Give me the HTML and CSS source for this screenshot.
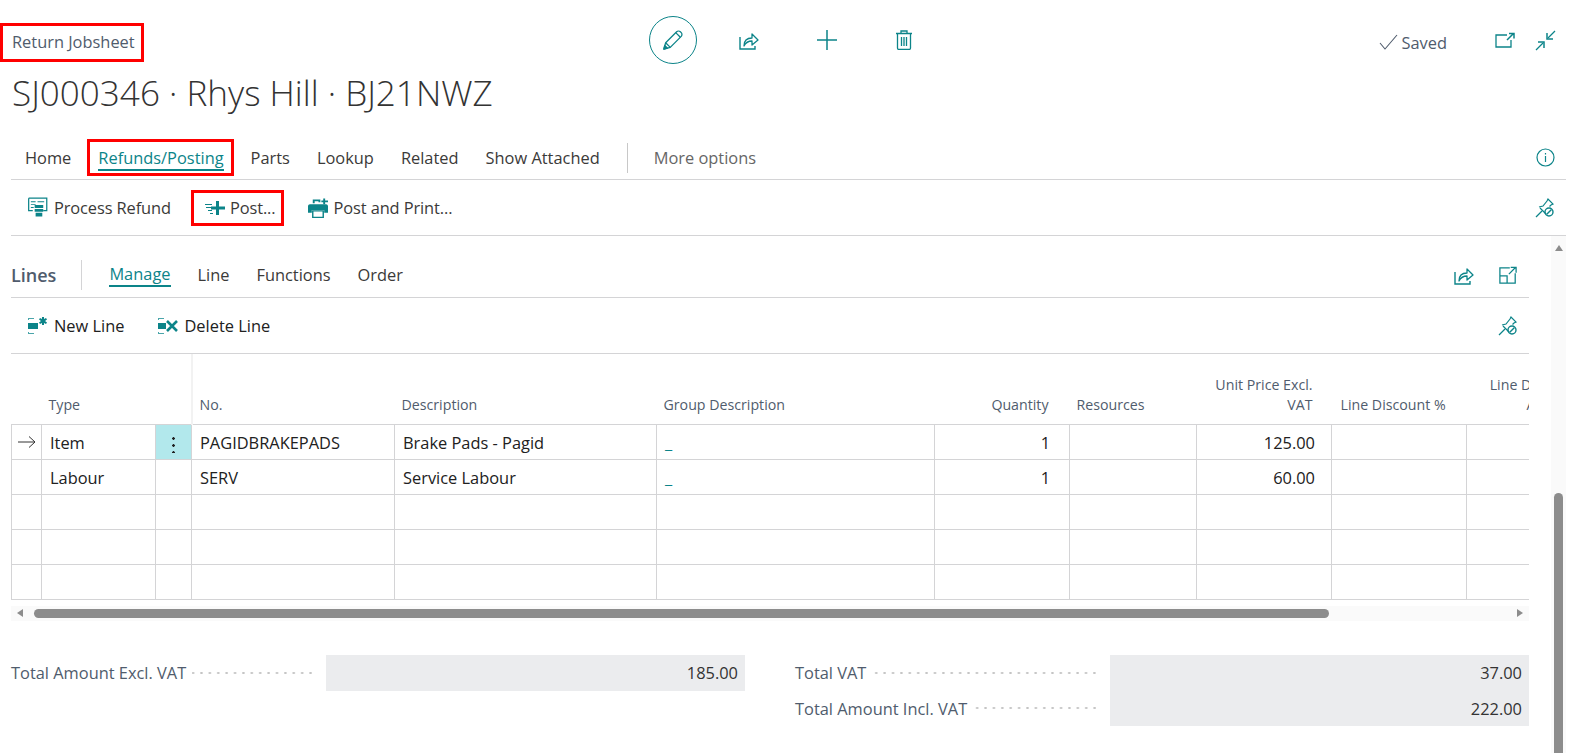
FILE: index.html
```html
<!DOCTYPE html>
<html lang="en">
<head>
  <meta charset="UTF-8" />
  <title>Return Jobsheet</title>
  <link rel="stylesheet" href="styles.css">
</head>
<body>

<svg class="sprite" xmlns="http://www.w3.org/2000/svg">
  <symbol id="i-share" viewBox="0 0 20 20">
    <path d="M1 7v12h15v-3" fill="none" stroke="currentColor" stroke-width="1.4"/>
    <path d="M5 16c0-5 3-8 8-8V4l6 6-6 5v-4c-3 0-6 1-8 5z" fill="none" stroke="currentColor" stroke-width="1.3" stroke-linejoin="round"/>
  </symbol>
  <symbol id="i-pin" viewBox="0 0 20 20">
    <path d="M1 19l6-6" fill="none" stroke="currentColor" stroke-width="1.2"/>
    <path d="M4 9l4-1 4-5 1-2 5 5-2 1-1.500 1.500M11 16l-1-1-5-5" fill="none" stroke="currentColor" stroke-width="1.200"/>
    <circle cx="14" cy="14" r="4" fill="none" stroke="currentColor" stroke-width="1.400"/>
    <path d="M11.500 16.500l5-5" stroke="currentColor" stroke-width="1.400"/>
  </symbol>
</svg>

<header class="page-head">
  <div class="head-top">
    <div class="head-left">
      <span class="caption marked">Return Jobsheet</span>
    </div>
    <div class="head-tools">
      <span class="edit-btn">
        <svg width="24" height="24" viewBox="0 0 24 24" fill="none" stroke="currentColor" stroke-width="1.4" stroke-linejoin="round">
          <path d="M2 22l2-7L16 3c1-1 3-1 4 0l1 1c1 1 1 3 0 4L9 20z"/>
          <path d="M4 15l5 5M15 4l5 5"/>
          <path d="M2 22l1-4 3 3z" fill="currentColor"/>
        </svg>
      </span>
      <svg class="tool share-top"><use href="#i-share"/></svg>
      <svg class="tool plus" viewBox="0 0 20 20"><path d="M10 0v20M0 10h20" stroke="currentColor" stroke-width="1.500"/></svg>
      <svg class="tool trash" viewBox="0 0 18 20" fill="none" stroke="currentColor" stroke-width="1.300">
        <path d="M1 3.500h16M6 3V1h6v2M2.500 4v14c0 1 .5 1.500 1.500 1.500h10c1 0 1.500-.5 1.500-1.500V4"/>
        <path d="M6.500 7v9M9 7v9M11.500 7v9"/>
      </svg>
    </div>
    <div class="head-right">
      <span class="saved">
        <svg width="19" height="16" viewBox="0 0 19 16" fill="none" stroke="currentColor" stroke-width="1.100"><path d="M1 9l5 6L18 1"/></svg>
        Saved
      </span>
      <svg class="open-icon" width="20" height="16" viewBox="0 0 20 16" fill="none" stroke="currentColor" stroke-width="1.300">
        <path d="M12 3H1v12h15V8"/>
        <path d="M12 8l6-6M14 1.500h5v5" stroke-width="1.500"/>
      </svg>
      <svg width="21" height="21" viewBox="0 0 21 21" fill="none" stroke="currentColor" stroke-width="1.300">
        <path d="M20 1l-7 7M1 20l7-7"/>
        <path d="M12 3v6h6M3 12h6v6" stroke-width="1.500"/>
      </svg>
    </div>
  </div>
  <h1 class="title">SJ000346 · Rhys Hill · BJ21NWZ</h1>

  <nav class="tabs">
    <a class="tab">Home</a>
    <a class="tab active marked">Refunds/Posting</a>
    <a class="tab">Parts</a>
    <a class="tab">Lookup</a>
    <a class="tab">Related</a>
    <a class="tab">Show Attached</a>
    <span class="tab-sep"></span>
    <a class="tab more">More options</a>
    <svg class="info" width="19" height="19" viewBox="0 0 19 19" fill="none" stroke="currentColor" stroke-width="1.200">
      <circle cx="9.500" cy="9.500" r="8.500"/>
      <path d="M9.500 8v6M9.500 5v1.500"/>
    </svg>
  </nav>

  <div class="actions page-actions">
    <a class="action">
      <svg width="20" height="21" viewBox="0 0 21 21">
        <path d="M.7.700h19v13H16M5 13.700H.7V.7" fill="none" stroke="currentColor" stroke-width="1.300"/>
        <path d="M3 4h5v1H3zM3 7h5v1H3zM3 10h3v1H3zM10 4h7v1h-7z" fill="currentColor"/>
        <path d="M7 8h9v3H7zM7 12h9v3H7zM8 16h7v4H8z" fill="currentColor"/>
      </svg>
      Process Refund
    </a>
    <a class="action post marked">
      <svg width="20" height="14" viewBox="0 0 20 14">
        <path d="M0 3h7v1H0zM1 6h6v1H1zM3 9h4v1H3zM5 12h3v1H5z" fill="currentColor"/>
        <path d="M11 0h3v5.500h6v3h-6V14h-3V8.500H6v-3h5z" fill="currentColor"/>
      </svg>
      Post...
    </a>
    <a class="action">
      <svg width="20" height="20" viewBox="0 0 21 20">
        <path d="M5 1h8v3h-2V3H7v2H5zM16 0h2v2h3v2h-3v2h-2V4h-2V2h2z" fill="currentColor"/>
        <path d="M2 6h17c1 0 2 1 2 2v7h-4v-3H4v3H0V8c0-1 1-2 2-2z" fill="currentColor"/>
        <path d="M5 13h11v7H5z" fill="none" stroke="currentColor" stroke-width="1.500"/>
      </svg>
      Post and Print...
    </a>
    <svg class="action-pin"><use href="#i-pin"/></svg>
  </div>
</header>

<div class="content">
  <main class="part">
    <div class="part-head">
      <span class="part-title">Lines</span>
      <span class="part-sep"></span>
      <a class="sub-tab active">Manage</a>
      <a class="sub-tab">Line</a>
      <a class="sub-tab">Functions</a>
      <a class="sub-tab">Order</a>
      <svg class="part-icon share-part"><use href="#i-share"/></svg>
      <svg class="part-icon expand" viewBox="0 0 20 20" fill="none" stroke="currentColor" stroke-width="1.400">
        <path d="M12 2H1v17h17V8M1 11h8v8"/>
        <path d="M11 9l7-7M13 1.500h6v6"/>
      </svg>
    </div>

    <div class="actions part-actions">
      <a class="action">
        <svg width="20" height="18" viewBox="0 0 20 18">
          <path d="M0 3V1h6v1H1v1zM0 15v2h6v-1H1v-1z" fill="#4aa5aa"/>
          <path d="M0 6h10v6H0z" fill="currentColor"/>
          <path d="M14 0h2v2l2-1 1 1.500L17 4l2 1.500-1 1.500-2-1v2h-2V6l-2 1-1-1.500L13 4l-2-1.500L12 1l2 1z" fill="currentColor"/>
        </svg>
        New Line
      </a>
      <a class="action">
        <svg width="20" height="18" viewBox="0 0 20 18">
          <path d="M0 3V1h6v1H1v1zM0 15v2h6v-1H1v-1z" fill="#4aa5aa"/>
          <path d="M0 6h8v6H0z" fill="currentColor"/>
          <path d="M9 4l10 10M19 4L9 14" stroke="currentColor" stroke-width="2.600"/>
        </svg>
        Delete Line
      </a>
      <svg class="part-pin"><use href="#i-pin"/></svg>
    </div>

    <div class="grid-wrap">
      <table class="grid">
        <colgroup>
          <col class="c-arrow"><col class="c-type"><col class="c-menu"><col class="c-no">
          <col class="c-desc"><col class="c-group"><col class="c-qty"><col class="c-res">
          <col class="c-price"><col class="c-disc"><col class="c-amt">
        </colgroup>
        <thead>
          <tr>
            <th></th>
            <th>Type</th>
            <th class="frozen"></th>
            <th>No.</th>
            <th>Description</th>
            <th>Group Description</th>
            <th class="num qty">Quantity</th>
            <th>Resources</th>
            <th class="num">Unit Price Excl.<br>VAT</th>
            <th class="disc">Line Discount %</th>
            <th class="num">Line Discount<br>Amount</th>
          </tr>
        </thead>
        <tbody>
          <tr>
            <td class="arrow">
              <svg width="18" height="12" viewBox="0 0 18 12" fill="none" stroke="#333" stroke-width="1"><path d="M0 6h17M11 .5L17 6l-6 5.500"/></svg>
            </td>
            <td>Item</td>
            <td class="menu"><span class="dots"></span></td>
            <td>PAGIDBRAKEPADS</td>
            <td>Brake Pads - Pagid</td>
            <td class="link">_</td>
            <td class="num qty">1</td>
            <td></td>
            <td class="num">125.00</td>
            <td></td>
            <td></td>
          </tr>
          <tr>
            <td></td>
            <td>Labour</td>
            <td></td>
            <td>SERV</td>
            <td>Service Labour</td>
            <td class="link">_</td>
            <td class="num qty">1</td>
            <td></td>
            <td class="num">60.00</td>
            <td></td>
            <td></td>
          </tr>
          <tr><td></td><td></td><td></td><td></td><td></td><td></td><td></td><td></td><td></td><td></td><td></td></tr>
          <tr><td></td><td></td><td></td><td></td><td></td><td></td><td></td><td></td><td></td><td></td><td></td></tr>
          <tr><td></td><td></td><td></td><td></td><td></td><td></td><td></td><td></td><td></td><td></td><td></td></tr>
        </tbody>
      </table>
    </div>

    <div class="hscroll">
      <span class="hscroll-start"><span class="arrow-left"></span></span>
      <span class="hscroll-thumb"></span>
      <span class="arrow-right"></span>
    </div>

    <div class="totals">
      <div class="total-col">
        <div class="total-row">
          <div class="total-label"><span>Total Amount Excl. VAT</span><i class="leader"></i></div>
          <div class="total-value">185.00</div>
        </div>
      </div>
      <div class="total-col">
        <div class="total-row">
          <div class="total-label"><span>Total VAT</span><i class="leader"></i></div>
          <div class="total-value">37.00</div>
        </div>
        <div class="total-row">
          <div class="total-label"><span>Total Amount Incl. VAT</span><i class="leader"></i></div>
          <div class="total-value">222.00</div>
        </div>
      </div>
    </div>
  </main>

  <aside class="vscroll">
    <span class="arrow-up"></span>
    <span class="vscroll-thumb"></span>
  </aside>
</div>

</body>
</html>
```

FILE: styles.css
```css
* {
  box-sizing: border-box;
}

html, body {
  height: 100%;
  margin: 0;
  padding: 0;
  overflow: hidden;
  background: #ffffff;
  color: #212121;
  font-family: 'Open Sans', 'Noto Sans', sans-serif;
  font-size: 16.4px;
}

body {
  display: flex;
  flex-direction: column;
}

.sprite {
  display: none;
}

svg {
  flex: none;
  color: #0c8489;
}

/* red annotation boxes drawn over the screenshot */
.marked {
  position: relative;
}

.marked::after {
  content: "";
  position: absolute;
  border: 3px solid #ff0000;
}

/* page header */
.page-head {
  padding: 0 20px 0 11px;
}

.head-top {
  display: flex;
  align-items: center;
  height: 80px;
}

.head-left {
  width: 638px;
}

.caption {
  display: inline-block;
  margin-top: 4px;
  padding-left: 1px;
  line-height: 22px;
  color: #505c6d;
}

.caption::after {
  inset: -8px -9px -9px -11px;
}

.head-tools {
  display: flex;
  align-items: center;
}

.edit-btn {
  display: flex;
  align-items: center;
  justify-content: center;
  width: 48px;
  height: 48px;
  border: 1px solid #0c8489;
  border-radius: 50%;
  color: #0c8489;
}

.edit-btn svg {
  width: 22px;
  height: 22px;
}

.tool {
  width: 20px;
  height: 20px;
}

.share-top {
  margin-left: 42px;
}

.plus {
  margin-left: 58px;
}

.trash {
  margin-left: 58px;
  width: 18px;
}

.head-right {
  display: flex;
  align-items: center;
  margin-left: auto;
  padding-right: 10px;
}

.saved {
  display: flex;
  align-items: center;
  gap: 3px;
  margin-top: 4px;
  color: #505c6d;
}

.saved svg {
  color: #505c6d;
}

.open-icon {
  margin-left: 48px;
  margin-right: 20px;
}

.title {
  margin: -10px 0 0;
  padding-left: 1px;
  font-size: 35.1px;
  line-height: 44px;
  font-weight: 300;
  color: #333333;
}

/* tabs */
.tabs {
  display: flex;
  align-items: center;
  height: 44px;
  margin-top: 22px;
  padding-left: 14px;
  border-bottom: 1px solid #d4d4d6;
}

.tab {
  position: relative;
  margin-right: 27px;
  line-height: 22px;
  color: #3b3a39;
}

.tab.active {
  color: #0c8489;
  border-bottom: 2px solid #0c8489;
  margin-top: 2px;
}

.tab.active::after {
  inset: -8px -10px -7px -11px;
}

.tab-sep {
  width: 1px;
  height: 30px;
  background: #c8c8c8;
  margin-right: 26px;
}

.tab.more {
  color: #666666;
}

.info {
  margin-left: auto;
  margin-right: 11px;
}

/* action bars */
.actions {
  display: flex;
  align-items: center;
  border-bottom: 1px solid #d4d4d6;
  line-height: 22px;
  color: #3b3a39;
}

.page-actions {
  height: 56px;
  padding-left: 17px;
  letter-spacing: -0.1px;
}

.action {
  position: relative;
  display: flex;
  align-items: center;
  gap: 6px;
  margin-right: 34px;
}

.post {
  gap: 5px;
  margin-right: 32px;
}

.post::after {
  inset: -7px -8px -7px -14px;
}

.action-pin {
  width: 20px;
  height: 20px;
  margin-left: auto;
  margin-right: 11px;
}

/* main content */
.content {
  flex: 1;
  display: flex;
  min-height: 0;
  padding: 0 20px 0 11px;
}

.part {
  width: 1518px;
}

.part-head {
  display: flex;
  align-items: center;
  height: 62px;
  padding-top: 17px;
  border-bottom: 1px solid #d4d4d6;
}

.part-title {
  font-size: 18px;
  font-weight: 600;
  color: #505c6d;
}

.part-sep {
  width: 1px;
  height: 30px;
  background: #d4d4d6;
  margin: 0 27px 0 25px;
}

.sub-tab {
  margin-right: 27px;
  line-height: 22px;
  color: #3b3a39;
}

.sub-tab.active {
  color: #0c8489;
  border-bottom: 2px solid #0c8489;
}

.part-icon {
  width: 20px;
  height: 20px;
}

.share-part {
  margin-left: auto;
}

.expand {
  width: 18px;
  height: 18px;
  margin-left: 25px;
  margin-right: 12px;
}

.part-actions {
  height: 56px;
  padding-left: 17px;
  color: #212121;
}

.part-pin {
  width: 20px;
  height: 20px;
  margin-left: auto;
  margin-right: 11px;
}

/* lines grid */
.grid-wrap {
  overflow: hidden;
}

.grid {
  table-layout: fixed;
  border-collapse: collapse;
  width: 1587px;
}

.c-arrow { width: 30px; }
.c-type { width: 114px; }
.c-menu { width: 36px; }
.c-no { width: 203px; }
.c-desc { width: 262px; }
.c-group { width: 278px; }
.c-qty { width: 135px; }
.c-res { width: 127px; }
.c-price { width: 135px; }
.c-disc { width: 135px; }
.c-amt { width: 132px; }

.grid th {
  height: 70px;
  padding: 0 7px 9px;
  vertical-align: bottom;
  text-align: left;
  font-size: 14.2px;
  line-height: 20px;
  font-weight: 400;
  color: #505c6d;
  white-space: nowrap;
  overflow: hidden;
  border-bottom: 1px solid #d4d4d6;
}

.grid th.frozen {
  border-right: 2px solid #f2f2f2;
}

.grid th.disc {
  padding-left: 9px;
}

.grid td {
  height: 35px;
  padding: 1px 8px 0;
  border: 1px solid #d4d4d6;
  white-space: nowrap;
}

.grid td.num {
  text-align: right;
  padding-right: 16px;
}

.grid th.num {
  text-align: right;
  padding-right: 19px;
}

.grid td.qty {
  padding-right: 19px;
}

.grid th.qty {
  padding-right: 21px;
}

.grid td.arrow {
  padding: 0 0 0 6px;
}

.grid td.arrow svg {
  display: block;
}

.grid td.menu {
  background: #b2e8ec;
  padding: 0;
  text-align: center;
}

.dots {
  display: inline-block;
  width: 3px;
  height: 18px;
  vertical-align: middle;
  background: radial-gradient(circle, #222222 1.2px, transparent 1.5px) 0 0 / 3px 7px repeat-y;
}

.grid td.link {
  color: #0c8489;
}

/* scrollbars */
.hscroll {
  display: flex;
  align-items: center;
  height: 15px;
  margin-top: 6px;
  background: #fafafa;
}

.hscroll-start {
  display: flex;
  align-items: center;
  width: 23px;
  padding-left: 6px;
}

.hscroll-thumb {
  width: 1295px;
  height: 9px;
  border-radius: 5px;
  background: #8c8c8c;
}

.arrow-left {
  border: 4px solid transparent;
  border-left: 0;
  border-right: 6px solid #8c8c8c;
}

.arrow-right {
  margin-left: auto;
  margin-right: 6px;
  border: 4px solid transparent;
  border-right: 0;
  border-left: 6px solid #8c8c8c;
}

.vscroll {
  display: flex;
  flex-direction: column;
  justify-content: space-between;
  align-items: center;
  width: 15px;
  margin-left: 22px;
  padding-top: 9px;
  background: #fafafa;
}

.arrow-up {
  border: 4px solid transparent;
  border-top: 0;
  border-bottom: 6px solid #8c8c8c;
}

.vscroll-thumb {
  width: 9px;
  height: 260px;
  border-radius: 5px 5px 0 0;
  background: #8c8c8c;
}

/* totals */
.totals {
  display: flex;
  gap: 50px;
  margin-top: 34px;
}

.total-col {
  width: 734px;
}

.total-row {
  display: flex;
  height: 36px;
}

.total-row + .total-row {
  height: 35px;
}

.total-label {
  display: flex;
  align-items: center;
  width: 315px;
  padding-right: 11px;
  color: #505c6d;
  white-space: nowrap;
}

.leader {
  flex: 1;
  height: 4px;
  margin-left: 6px;
  background: radial-gradient(circle, #c4c4c4 1px, transparent 1.2px) right center / 8.4px 4px repeat-x;
}

.total-value {
  flex: 1;
  display: flex;
  align-items: center;
  justify-content: flex-end;
  padding-right: 7px;
  background: #ebecee;
  color: #333333;
}
```
